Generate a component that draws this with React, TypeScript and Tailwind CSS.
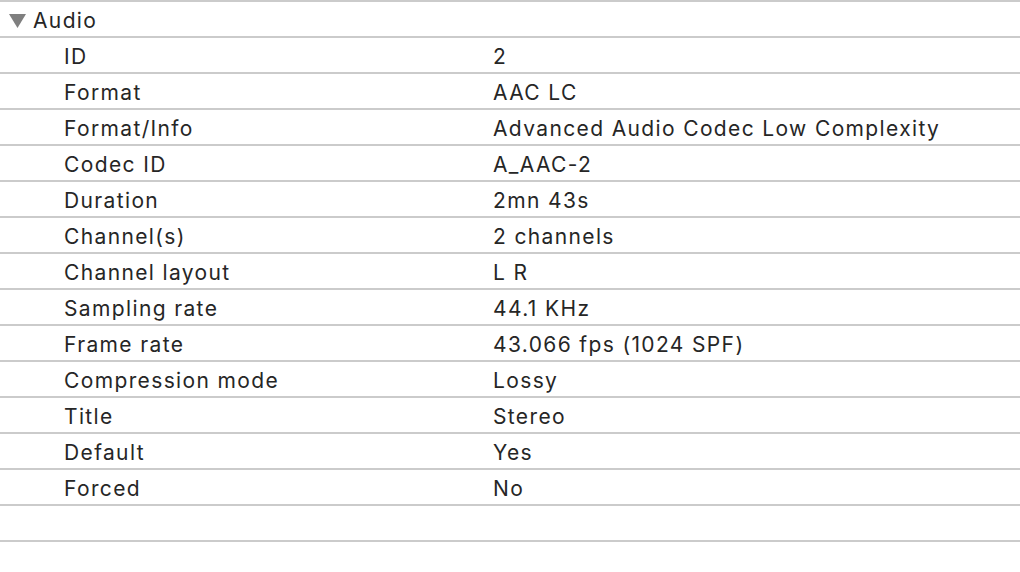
import React from 'react'

const rows: [string, string][] = [
  ['ID', '2'],
  ['Format', 'AAC LC'],
  ['Format/Info', 'Advanced Audio Codec Low Complexity'],
  ['Codec ID', 'A_AAC-2'],
  ['Duration', '2mn 43s'],
  ['Channel(s)', '2 channels'],
  ['Channel layout', 'L R'],
  ['Sampling rate', '44.1 KHz'],
  ['Frame rate', '43.066 fps (1024 SPF)'],
  ['Compression mode', 'Lossy'],
  ['Title', 'Stereo'],
  ['Default', 'Yes'],
  ['Forced', 'No'],
]

export default function App() {
  return (
    <div
      className="w-[1020px] h-[572px] bg-white text-[#262626] text-[21px] tracking-[0.065em] overflow-hidden"
      style={{ fontFamily: 'Inter, "Open Sans", sans-serif' }}
    >
      <div className="border-t-2 border-[#cbcbcb]">
        <div className="flex items-center h-9 pt-[3px] border-b-2 border-[#cbcbcb]">
          <svg className="ml-[9px] mr-[7px] w-[17px] h-[14px]" viewBox="0 0 17 14">
            <path d="M0 0 H17 L8.5 14 Z" fill="#7f7f7f" />
          </svg>
          <span>Audio</span>
        </div>
        {rows.map(([label, value]) => (
          <div key={label} className="flex items-center h-9 pt-[3px] border-b-2 border-[#cbcbcb]">
            <div className="w-[493px] pl-[64px]">{label}</div>
            <div>{value}</div>
          </div>
        ))}
        <div className="h-9 border-b-2 border-[#cbcbcb]" />
      </div>
    </div>
  )
}
